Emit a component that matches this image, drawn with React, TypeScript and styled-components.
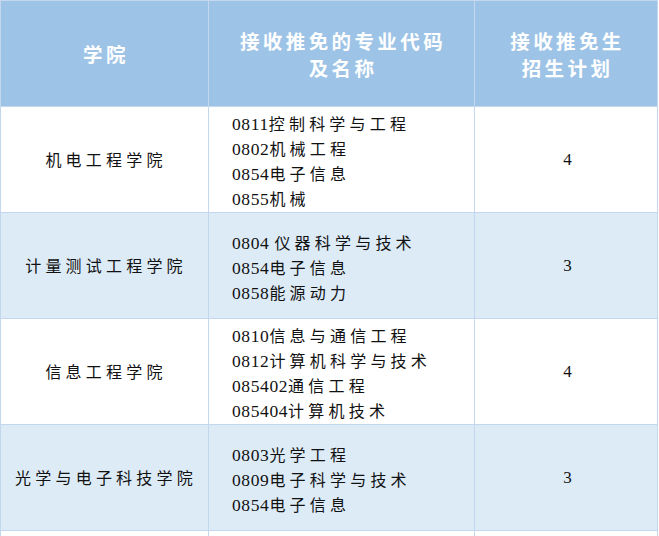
import * as React from 'react'
import styled, { createGlobalStyle } from 'styled-components'

const GlobalStyle = createGlobalStyle`
  html, body {
    margin: 0;
    padding: 0;
    background: #fff;
    overflow: hidden;
  }
  * {
    box-sizing: border-box;
  }
`

interface Major {
  code: string;
  name: string;
}

interface College {
  name: string;
  majors: Major[];
  quota: number;
}

const colleges: College[] = [
  {
    name: '机电工程学院',
    majors: [
      { code: '0811', name: '控制科学与工程' },
      { code: '0802', name: '机械工程' },
      { code: '0854', name: '电子信息' },
      { code: '0855', name: '机械' },
    ],
    quota: 4,
  },
  {
    name: '计量测试工程学院',
    majors: [
      { code: '0804 ', name: '仪器科学与技术' },
      { code: '0854', name: '电子信息' },
      { code: '0858', name: '能源动力' },
    ],
    quota: 3,
  },
  {
    name: '信息工程学院',
    majors: [
      { code: '0810', name: '信息与通信工程' },
      { code: '0812', name: '计算机科学与技术' },
      { code: '085402', name: '通信工程' },
      { code: '085404', name: '计算机技术' },
    ],
    quota: 4,
  },
  {
    name: '光学与电子科技学院',
    majors: [
      { code: '0803', name: '光学工程' },
      { code: '0809', name: '电子科学与技术' },
      { code: '0854', name: '电子信息' },
    ],
    quota: 3,
  },
]

const border = '#c3d8ee'

const Table = styled.div`
  width: 658px;
  display: grid;
  grid-template-columns: 208px 266px 183px;
  grid-auto-rows: 106px;
  border-left: 1px solid ${border};
  border-top: 1px solid ${border};
`

const HeadCell = styled.div`
  display: flex;
  flex-direction: column;
  align-items: center;
  justify-content: center;
  background: #9dc3e6;
  border-right: 1px solid ${border};
  border-bottom: 1px solid ${border};
  color: #fff;
  font-family: "Noto Sans CJK SC", sans-serif;
  font-weight: bold;
  font-size: 19.5px;
  line-height: 27px;
  letter-spacing: 3.4px;
  padding-left: 3px;
  text-align: center;
`

const Cell = styled.div<{ shaded: boolean; align?: 'left' | 'center' }>`
  display: flex;
  flex-direction: column;
  justify-content: center;
  align-items: ${(props) => (props.align === 'left' ? 'flex-start' : 'center')};
  padding-left: ${(props) => (props.align === 'left' ? '23px' : '3px')};
  padding-top: ${(props) => (props.align === 'left' ? '3px' : '0')};
  background: ${(props) => (props.shaded ? '#ddebf7' : '#fff')};
  border-right: 1px solid ${border};
  border-bottom: 1px solid ${border};
  color: #111;
  font-family: "Noto Sans CJK SC", sans-serif;
  font-size: 16px;
  line-height: 25px;
  letter-spacing: 4.2px;
`

const Line = styled.div`
  height: 25px;
  white-space: pre;
`

const Code = styled.span`
  font-family: "Liberation Serif", serif;
  font-size: 17.5px;
  line-height: 25px;
  letter-spacing: 0.6px;
`

const Quota = styled.span`
  font-family: "Liberation Serif", serif;
  font-size: 17px;
  letter-spacing: 0;
`

const App: React.FunctionComponent = () => {
  return (
    <>
      <GlobalStyle />
      <Table>
        <HeadCell>学院</HeadCell>
        <HeadCell>
          <div>接收推免的专业代码</div>
          <div>及名称</div>
        </HeadCell>
        <HeadCell>
          <div>接收推免生</div>
          <div>招生计划</div>
        </HeadCell>
        {colleges.map((college, index) => {
          const shaded = index % 2 === 1
          return (
            <React.Fragment key={college.name}>
              <Cell shaded={shaded}>{college.name}</Cell>
              <Cell shaded={shaded} align="left">
                {college.majors.map((major) => (
                  <Line key={major.code + major.name}>
                    <Code>{major.code}</Code>
                    {major.name}
                  </Line>
                ))}
              </Cell>
              <Cell shaded={shaded}>
                <Quota>{college.quota}</Quota>
              </Cell>
            </React.Fragment>
          )
        })}
        <Cell shaded={false} />
        <Cell shaded={false} />
        <Cell shaded={false} />
      </Table>
    </>
  )
}

export default App
